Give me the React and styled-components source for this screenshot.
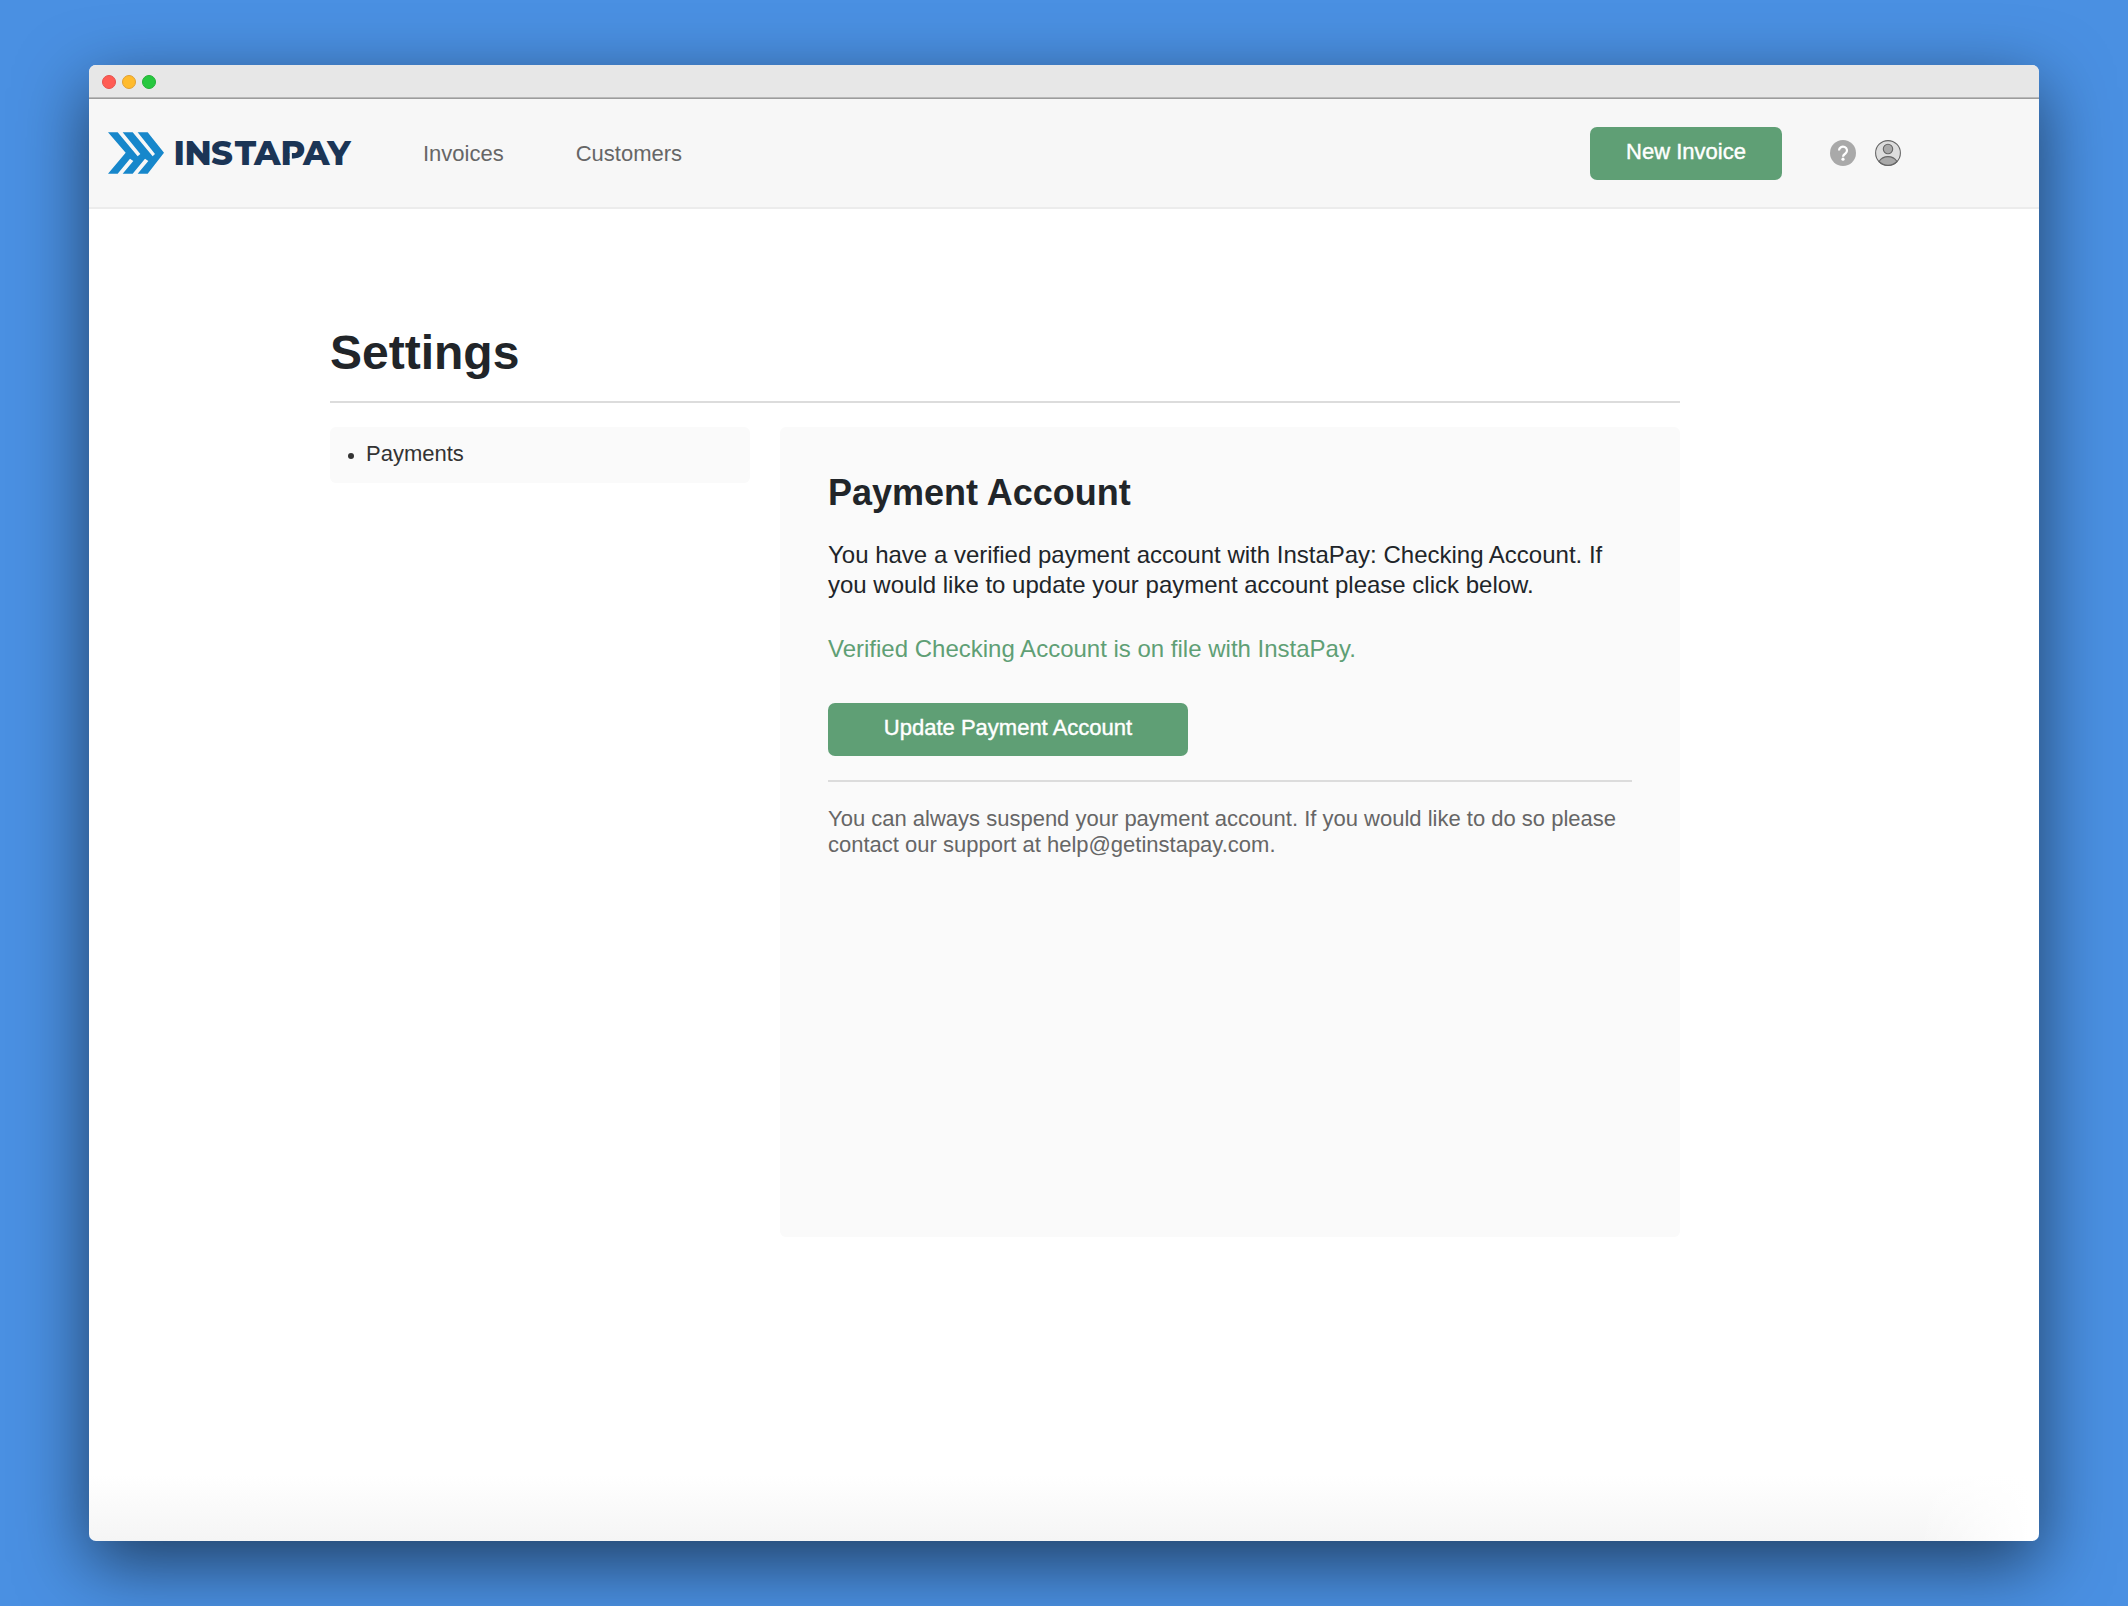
import React from 'react'
import styled, { createGlobalStyle } from 'styled-components';

const GlobalStyle = createGlobalStyle`
  * {
    box-sizing: border-box;
  }

  body {
    margin: 0;
    background: #4a90e2;
    font-family: "Liberation Sans", Arial, sans-serif;
    color: #212529;
  }
`

const Desktop = styled.div`
  height: 1606px;
  padding: 65px 89px;
  overflow: hidden;
`

const Window = styled.div`
  display: flex;
  flex-direction: column;
  width: 1950px;
  height: 1476px;
  border-radius: 7px;
  overflow: hidden;
  background:
    linear-gradient(to right, rgba(255, 255, 255, 0) 1830px, #fff 1940px),
    linear-gradient(#fff 1410px, #f5f5f5 1476px);
  box-shadow: 0 22px 70px rgba(0, 0, 0, 0.57);
`

const TitleBar = styled.div`
  display: flex;
  align-items: center;
  gap: 6px;
  height: 34px;
  padding: 1px 0 0 13px;
  background: #e7e7e7;
  border-bottom: 1px solid #9c9c9c;
  box-shadow: inset 0 -1px 0 #b9b9b9;
`

const Dot = styled.span`
  width: 14px;
  height: 14px;
  border-radius: 50%;
  background: ${props => props.$fill};
  border: 1px solid ${props => props.$edge};
`

const Header = styled.header`
  display: flex;
  align-items: center;
  height: 110px;
  padding: 0 138px 0 19px;
  background: #f7f7f7;
  border-bottom: 2px solid #ececec;
`

const Brand = styled.div`
  display: flex;
  align-items: center;
  gap: 9px;
`

const Nav = styled.nav`
  display: flex;
  gap: 72px;
  margin-left: 68px;
  padding-top: 2px;
`

const NavLink = styled.a`
  font-size: 22px;
  line-height: 26px;
  color: #666;
`

const Actions = styled.div`
  display: flex;
  align-items: center;
  margin-left: auto;
`

const Button = styled.button`
  display: block;
  width: ${props => props.$width};
  height: 53px;
  padding: 0 0 3px;
  border: none;
  border-radius: 7px;
  background: #5f9f75;
  color: #fff;
  font-family: inherit;
  font-size: 22px;
  line-height: 26px;
  -webkit-text-stroke: 0.4px #fff;
`

const IconGroup = styled.div`
  display: flex;
  gap: 19px;
  margin-left: 48px;
`

const Main = styled.main`
  width: 1350px;
  margin: 116px 0 0 241px;
`

const Title = styled.h1`
  margin: 0 0 24px;
  padding-bottom: 20px;
  border-bottom: 2px solid #dcdcdc;
  font-size: 48px;
  line-height: 56px;
`

const Columns = styled.div`
  display: flex;
  align-items: flex-start;
  gap: 30px;
`

const SideMenu = styled.ul`
  width: 420px;
  height: 56px;
  margin: 0;
  padding: 14px 18px;
  border-radius: 6px;
  background: #fafafa;
  list-style: none;
`

const SideItem = styled.li`
  display: flex;
  align-items: center;
  gap: 12px;
  font-size: 22px;
  line-height: 26px;
  color: #333;

  &::before {
    content: '';
    width: 6px;
    height: 6px;
    margin-top: 4px;
    border-radius: 50%;
    background: #333;
  }
`

const Card = styled.section`
  width: 900px;
  height: 810px;
  padding: 46px 48px;
  border-radius: 6px;
  background: #fafafa;
`

const CardTitle = styled.h2`
  margin: 0 0 27px;
  font-size: 36px;
  line-height: 40px;
`

const Text = styled.p`
  margin: 0 0 34px;
  font-size: 24px;
  line-height: 30px;
`

const Success = styled(Text)`
  margin-bottom: 39px;
  color: #5f9f75;
`

const Note = styled.p`
  margin: 24px 0 0;
  padding-top: 24px;
  border-top: 2px solid #dcdcdc;
  font-size: 22px;
  line-height: 26px;
  color: #666;
`

const Wordmark = styled.text`
  font-family: Montserrat, "Open Sans", sans-serif;
  font-weight: 800;
  font-size: 33.8px;
  fill: #1b3556;
`

const InstapayLogo = () => (
  <Brand>
    <svg width="56" height="42" viewBox="0 0 168 124" fill="#1787cb">
      <path d="M0 0H29L89 72L97 65L44 0H74L134 72L141 65L89 0H119L168 61.500L119 124H89L121 86L111 79L74 124H44L76 86L66 79L29 124H0L53 61.500Z" />
    </svg>
    <svg width="182" height="44" viewBox="-2 -7 182 44">
      <Wordmark x="-1.500 9.600 36.100 59.800 79 105.600 127.900 152.200" y="27">INSTAPAY</Wordmark>
      {/* the P is open between stem and bowl */}
      <path d="M114.700 14.500H116.900V22H114.700Z" fill="#f7f7f7" />
    </svg>
  </Brand>
)

const HelpIcon = () => (
  <svg width="26" height="26" viewBox="0 0 26 26">
    <circle cx="13" cy="13" r="13" fill="#a9a9a9" />
    <path d="M9 10.400a4 3.800 0 1 1 6.600 2.900c-1.400 1.100-2.600 1.700-2.600 3.500" fill="none" stroke="#fff" strokeWidth="2.200" />
    <circle cx="13" cy="19.200" r="1.600" fill="#fff" />
  </svg>
)

const UserIcon = () => (
  <svg width="26" height="26" viewBox="0 0 26 26" stroke="#666" strokeWidth="1.100">
    <circle cx="13" cy="13" r="12.400" fill="#ddd" />
    <circle cx="13" cy="9" r="4.700" fill="#a9a9a9" />
    <path d="M4 21.500C8 15 18 15 22 21.500A12.400 12.400 0 0 1 4 21.500Z" fill="#a9a9a9" />
  </svg>
)

const App = () => {
  return (
    <Desktop>
      <GlobalStyle />
      <Window>
        <TitleBar>
          <Dot $fill="#ff5c54" $edge="#e5514c" />
          <Dot $fill="#ffbb2d" $edge="#e0a033" />
          <Dot $fill="#27c83f" $edge="#22b036" />
        </TitleBar>
        <Header>
          <InstapayLogo />
          <Nav>
            <NavLink>Invoices</NavLink>
            <NavLink>Customers</NavLink>
          </Nav>
          <Actions>
            <Button $width="192px">New Invoice</Button>
            <IconGroup>
              <HelpIcon />
              <UserIcon />
            </IconGroup>
          </Actions>
        </Header>
        <Main>
          <Title>Settings</Title>
          <Columns>
            <SideMenu>
              <SideItem>Payments</SideItem>
            </SideMenu>
            <Card>
              <CardTitle>Payment Account</CardTitle>
              <Text>
                You have a verified payment account with InstaPay: Checking Account. If
                you would like to update your payment account please click below.
              </Text>
              <Success>Verified Checking Account is on file with InstaPay.</Success>
              <Button $width="360px">Update Payment Account</Button>
              <Note>
                You can always suspend your payment account. If you would like to do so please
                contact our support at help@getinstapay.com.
              </Note>
            </Card>
          </Columns>
        </Main>
      </Window>
    </Desktop>
  )
}

export default App
